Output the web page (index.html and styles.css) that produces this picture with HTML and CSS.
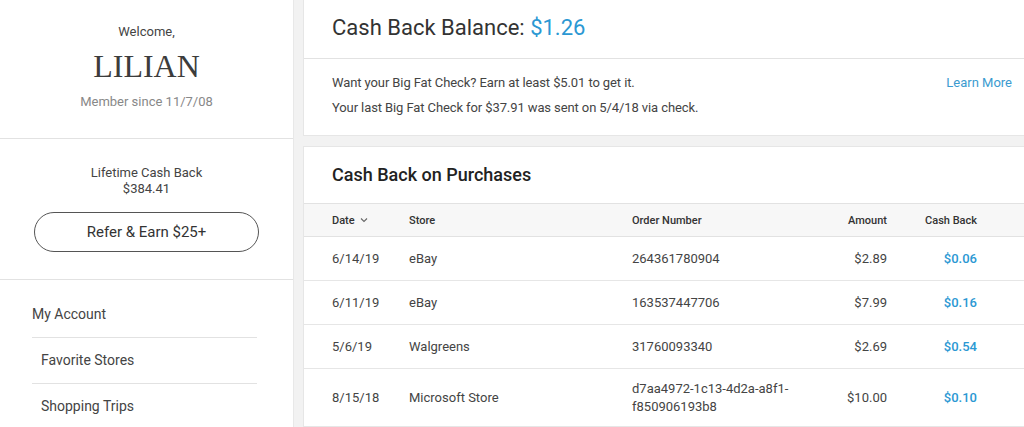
FILE: index.html
```html
<!DOCTYPE html>
<html>
<head>
<meta charset="utf-8">
<link rel="stylesheet" href="styles.css">
</head>
<body>
<div class="page">
  <aside class="sidebar">
    <section class="welcome">
      <div class="welcome-label">Welcome,</div>
      <div class="welcome-name">LILIAN</div>
      <div class="member-since">Member since 11/7/08</div>
    </section>
    <section class="lifetime">
      <div class="lifetime-label">Lifetime Cash Back</div>
      <div class="lifetime-value">$384.41</div>
      <button class="refer-btn">Refer &amp; Earn $25+</button>
    </section>
    <nav class="side-nav">
      <div class="nav-item">My Account</div>
      <div class="nav-item sub">Favorite Stores</div>
      <div class="nav-item sub last">Shopping Trips</div>
    </nav>
  </aside>
  <main class="main">
    <section class="panel balance-panel">
      <div class="balance-head">Cash Back Balance: <span class="blue">$1.26</span></div>
      <div class="balance-info">
        <div class="info-lines">
          <div>Want your Big Fat Check? Earn at least $5.01 to get it.</div>
          <div>Your last Big Fat Check for $37.91 was sent on 5/4/18 via check.</div>
        </div>
        <a class="learn-more">Learn More</a>
      </div>
    </section>
    <section class="panel purchases-panel">
      <h2 class="purchases-title">Cash Back on Purchases</h2>
      <table class="purchases">
        <colgroup>
          <col class="c-date"><col class="c-store"><col class="c-order"><col class="c-amount"><col class="c-cash"><col class="c-end">
        </colgroup>
        <thead>
          <tr>
            <th class="first">Date <svg class="chev" width="8" height="6" viewBox="0 0 8 6"><path d="M1 1.5 L4 4.5 L7 1.5" fill="none" stroke="#666" stroke-width="1.1"/></svg></th>
            <th>Store</th>
            <th>Order Number</th>
            <th class="num">Amount</th>
            <th class="num">Cash Back</th>
            <th></th>
          </tr>
        </thead>
        <tbody>
          <tr><td class="first">6/14/19</td><td>eBay</td><td>264361780904</td><td class="num">$2.89</td><td class="num cb">$0.06</td><td></td></tr>
          <tr><td class="first">6/11/19</td><td>eBay</td><td>163537447706</td><td class="num">$7.99</td><td class="num cb">$0.16</td><td></td></tr>
          <tr><td class="first">5/6/19</td><td>Walgreens</td><td>31760093340</td><td class="num">$2.69</td><td class="num cb">$0.54</td><td></td></tr>
          <tr class="tall"><td class="first">8/15/18</td><td>Microsoft Store</td><td class="order-wrap">d7aa4972-1c13-4d2a-a8f1-f850906193b8</td><td class="num">$10.00</td><td class="num cb">$0.10</td><td></td></tr>
        </tbody>
      </table>
    </section>
  </main>
</div>
</body>
</html>
```
FILE: styles.css
```css
* { box-sizing: border-box; }
html, body { margin: 0; padding: 0; }
body {
  background: #f2f2f2;
  font-family: Roboto, "Liberation Sans", Arial, sans-serif;
  color: #333;
  width: 1024px;
  height: 427px;
  overflow: hidden;
}
.page {
  display: flex;
  align-items: flex-start;
  height: 427px;
}
.sidebar {
  width: 294px;
  flex: none;
  background: #fff;
  height: 427px;
  border-right: 1px solid #e8e8e8;
}
.welcome {
  height: 139px;
  border-bottom: 1px solid #e2e2e2;
  text-align: center;
  padding-top: 23px;
}
.welcome-label {
  font-size: 13px;
  line-height: 18px;
  color: #444;
}
.welcome-name {
  font-family: "Liberation Serif", "Times New Roman", serif;
  font-size: 32px;
  line-height: 40px;
  margin-top: 5px;
  color: #3c3c3c;
  letter-spacing: 0;
}
.member-since {
  font-size: 13px;
  line-height: 18px;
  margin-top: 7px;
  color: #888;
}
.lifetime {
  height: 141px;
  border-bottom: 1px solid #e2e2e2;
  text-align: center;
  padding-top: 26px;
}
.lifetime-label, .lifetime-value {
  font-size: 13px;
  line-height: 16px;
  color: #444;
}
.refer-btn {
  display: block;
  margin: 15px 0 0 34px;
  width: 225px;
  height: 40px;
  border: 1px solid #555;
  border-radius: 20px;
  background: #fff;
  font-family: Roboto, "Liberation Sans", Arial, sans-serif;
  font-size: 15px;
  color: #333;
}
.side-nav {
  padding: 12px 36px 0 32px;
}
.nav-item {
  height: 46px;
  line-height: 45px;
  font-size: 14px;
  color: #444;
  border-bottom: 1px solid #e2e2e2;
}
.nav-item.sub { padding-left: 9px; }
.nav-item.last { border-bottom: none; }

.main {
  flex: 1;
  margin-left: 9px;
  display: flex;
  flex-direction: column;
  gap: 10px;
}
.panel {
  background: #fff;
  border: 1px solid #e6e6e6;
  border-right: none;
  border-top: none;
}
.balance-head {
  height: 59px;
  border-bottom: 1px solid #e2e2e2;
  padding-left: 28px;
  font-size: 22px;
  line-height: 56px;
  color: #333;
}
.blue { color: #2b98d3; }
.balance-info {
  display: flex;
  justify-content: space-between;
  align-items: flex-start;
  padding: 11px 12px 14px 28px;
  font-size: 13px;
  line-height: 25px;
  color: #444;
  height: 76px;
  letter-spacing: -0.1px;
}
.learn-more {
  color: #3b9bd0;
  font-size: 13px;
  line-height: 25px;
  letter-spacing: 0;
}
.purchases-panel { border-top: 1px solid #e6e6e6; }
.purchases-title {
  margin: 0;
  height: 56px;
  padding-left: 28px;
  font-size: 18px;
  font-weight: 500;
  line-height: 55px;
  color: #222;
}
.purchases {
  width: 100%;
  table-layout: fixed;
  border-collapse: collapse;
}
.c-date { width: 105px; }
.c-store { width: 223px; }
.c-order { width: 168px; }
.c-amount { width: 87px; }
.c-cash { width: 90px; }
.purchases th {
  background: #f7f7f7;
  border-top: 1px solid #e2e2e2;
  border-bottom: 1px solid #e2e2e2;
  height: 33px;
  font-size: 11px;
  font-weight: 500;
  color: #333;
  text-align: left;
  padding: 0;
}
.purchases td {
  height: 44px;
  font-size: 13px;
  line-height: 18px;
  color: #444;
  padding: 0;
  border-bottom: 1px solid #e6e6e6;
}
.purchases tr.tall td { height: 58px; padding-top: 0; }
.purchases .first { padding-left: 28px; }
.purchases .num { text-align: right; }
.purchases .cb { color: #2b98d3; font-weight: 500; }
.chev { margin-left: 3px; vertical-align: 1px; }
.order-wrap { word-break: normal; }
```
